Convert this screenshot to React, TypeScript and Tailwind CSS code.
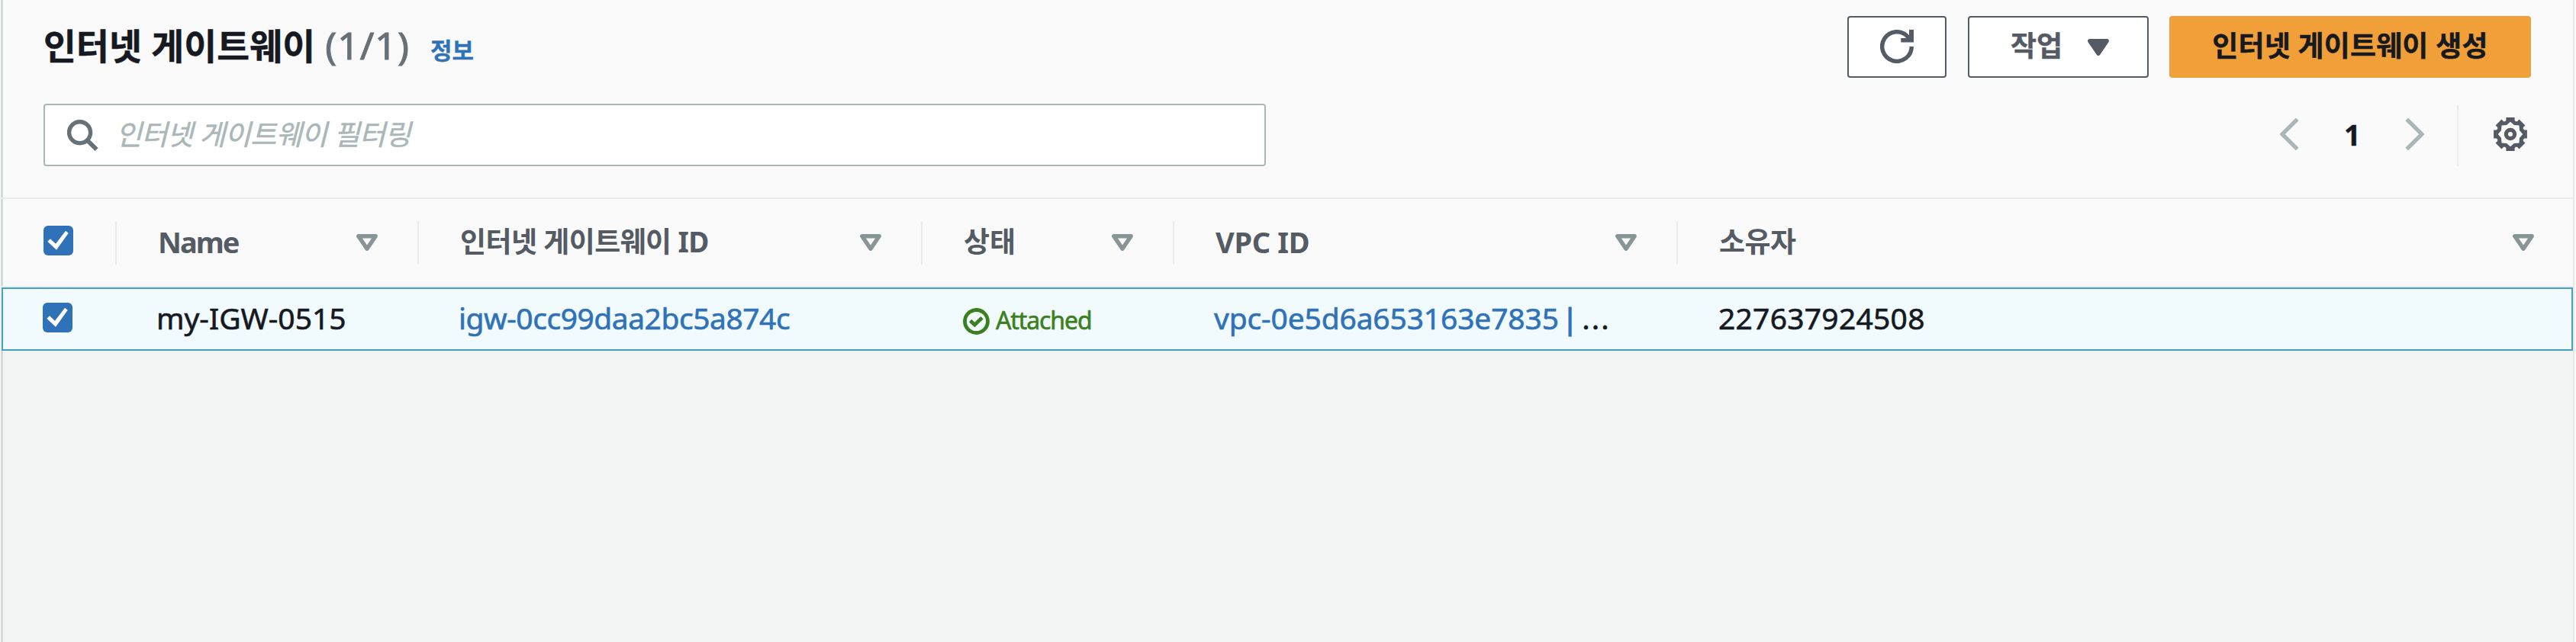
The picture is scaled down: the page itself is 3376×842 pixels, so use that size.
import type { ReactNode } from "react";

const polar = (radius: number, angle: number, offset = 0) => {
  const x = 22 + radius * Math.cos(angle) - offset * Math.sin(angle);
  const y = 22 + radius * Math.sin(angle) + offset * Math.cos(angle);
  return `${x.toFixed(2)} ${y.toFixed(2)}`;
};

const gearPath = (() => {
  const outer: string[] = [];
  const inner: string[] = [];
  for (let i = 0; i < 8; i++) {
    const a = (i * Math.PI) / 4;
    outer.push(polar(18.2, a, -5.6), polar(21.9, a, -5.6), polar(21.9, a, 5.6), polar(18.2, a, 5.6));
    outer.push(polar(18.2, a + Math.PI / 8));
    inner.push(polar(16.2, a), polar(13, a + Math.PI / 8));
  }
  return `M${outer.join("L")}ZM${inner.join("L")}Z`;
})();

function RefreshIcon() {
  return (
    <svg className="h-11 w-11" viewBox="0 0 44 44" fill="none">
      <path d="M41.3 22A19.3 19.3 0 1 1 36.6 9.4L40.5 13.5" stroke="#545b64" strokeWidth="5.4" />
      <path d="M38 0H44V16.5H27.3V11H38Z" fill="#545b64" />
    </svg>
  );
}

function GearIcon() {
  return (
    <svg className="h-11 w-11" viewBox="0 0 44 44">
      <path d={gearPath} fill="#545b64" fillRule="evenodd" />
      <circle cx="22" cy="22" r="5.6" fill="none" stroke="#545b64" strokeWidth="5.2" />
    </svg>
  );
}

function SearchIcon() {
  return (
    <svg className="h-[41px] w-[41px] shrink-0" viewBox="0 0 41 41" fill="none" stroke="#687078">
      <circle cx="16.6" cy="16.8" r="14" strokeWidth="5.4" />
      <path d="M26.3 27L38.6 39" strokeWidth="5.8" />
    </svg>
  );
}

function Chevron({ right = false }: { right?: boolean }) {
  return (
    <svg className="h-[42px] w-[25px]" viewBox="0 0 25 42" fill="none" stroke="#aab7b8" strokeWidth="5.4">
      <path d={right ? "M2.2 1.4L22 21L2.2 40.6" : "M22.8 1.4L3 21L22.8 40.6"} />
    </svg>
  );
}

function SortIcon({ filled = false }: { filled?: boolean }) {
  return (
    <svg className="h-[22px] w-7 shrink-0" viewBox="0 0 28 22" strokeLinejoin="round" strokeWidth="5.4">
      <path
        d="M2.8 2.7H25.2L14 19.2Z"
        fill={filled ? "#545b64" : "none"}
        stroke={filled ? "#545b64" : "#879596"}
      />
    </svg>
  );
}

function Checkbox() {
  return (
    <span role="checkbox" aria-checked="true" className="block h-[39px] w-[39px] rounded-[6px] bg-[#3072b7]">
      <svg className="h-full w-full" viewBox="0 0 39 39">
        <path d="M5.3 20.7L9 17.3L16 23.7L29 6.7L32.7 9.7L17 31.7Z" fill="#fff" />
      </svg>
    </span>
  );
}

function StatusIcon() {
  return (
    <svg className="h-[35px] w-[35px] shrink-0" viewBox="0 0 35 35" fill="none" stroke="#3b8020">
      <circle cx="17.5" cy="17.5" r="15" strokeWidth="4.8" />
      <path d="M9.6 16.6L15.4 22L25 12.8" strokeWidth="4.8" />
    </svg>
  );
}

function HeaderCell({ children, last = false }: { children: ReactNode; last?: boolean }) {
  return (
    <div
      className={`flex h-[57px] items-center justify-between border-r-2 pb-[3px] pl-[54px] ${
        last ? "border-transparent pr-[49px]" : "border-[#eaeded] pr-[52px]"
      }`}
    >
      {children}
      <span className="pt-[3px]">
        <SortIcon />
      </span>
    </div>
  );
}

export default function App() {
  return (
    <div className="flex h-[842px] w-[3376px] overflow-hidden whitespace-nowrap bg-[#f2f3f3] font-['Noto_Sans','Noto_Sans_CJK_KR',sans-serif] text-[#16191f]">
      <div className="w-[2px] bg-[#eff0f0]" />
      <main className="w-[3370px] shadow-[inset_1px_0_0_#b9c1c2,inset_2px_0_0_#e4e8e8]">
        <header className="h-[261px] border-b-2 border-[#eaeded] bg-[#fafafa] pl-[55px] pr-[55px] pt-[21px] shadow-[inset_1px_0_0_#b9c1c2,inset_2px_0_0_#e4e8e8]">
          <div className="flex h-[81px] items-center justify-between">
            <div className="flex items-baseline pt-[2px] leading-[80px]">
              <h1 className="text-[46.5px] font-bold tracking-[0.2px] [-webkit-text-stroke:0.5px]">인터넷 게이트웨이</h1>
              <span className="ml-[13px] text-[50px] tracking-[1px] text-[#687078] [-webkit-text-stroke:1px]">(1/1)</span>
              <a className="ml-[27px] text-[31px] font-bold text-[#2f72b8] [-webkit-text-stroke:0.3px]">정보</a>
            </div>
            <div className="flex text-[37px] font-bold leading-[60px] text-[#545b64]">
              <button className="flex h-[81px] w-[130px] items-center justify-center rounded-[4px] border-2 border-[#545b64] bg-white pb-px">
                <RefreshIcon />
              </button>
              <button className="ml-7 flex h-[81px] w-[237px] items-center justify-between rounded-[4px] border-2 border-[#545b64] bg-white pl-[54px] pr-[50px]">
                <span className="pb-[3px] [-webkit-text-stroke:0.4px]">작업</span>
                <SortIcon filled />
              </button>
              <button className="ml-[27px] flex h-[81px] w-[474px] items-center justify-center rounded-[4px] bg-[#f19f39] pb-[3px] tracking-[0.15px] text-[#16191f] [-webkit-text-stroke:0.4px]">
                인터넷 게이트웨이 생성
              </button>
            </div>
          </div>

          <div className="mt-[34px] flex h-[82px] items-center justify-between">
            <div className="flex h-[82px] w-[1602px] items-center rounded-[4px] border-2 border-[#aab7b8] bg-white pl-[29px]">
              <SearchIcon />
              <span className="ml-[23px] pb-[3px] text-[37px] italic leading-[60px] tracking-[-0.6px] text-[#aab7b8] [-webkit-text-stroke:0.5px]">
                인터넷 게이트웨이 필터링
              </span>
            </div>
            <div className="flex items-center pr-[5px]">
              <span className="pb-[2px]">
                <Chevron />
              </span>
              <span className="ml-[59px] w-[23px] pb-[3px] text-[38px] font-bold leading-[60px] [-webkit-text-stroke:0.4px]">1</span>
              <span className="ml-[57px] pb-[2px]">
                <Chevron right />
              </span>
              <span className="ml-[43px] h-[81px] w-[2px] bg-[#eaeded]" />
              <span className="ml-[46px] pb-[2px]">
                <GearIcon />
              </span>
            </div>
          </div>
        </header>

        <div className="grid h-[116px] grid-cols-[151px_396px_660px_330px_660px_1173px] items-center border-b-2 border-[#eaeded] bg-[#fafafa] text-[37px] font-bold leading-[50px] tracking-[-0.6px] text-[#545b64] shadow-[inset_1px_0_0_#b9c1c2,inset_2px_0_0_#e4e8e8]">
          <div className="flex h-[57px] items-center border-r-2 border-[#eaeded] pb-[5px] pl-[55px]">
            <Checkbox />
          </div>
          <HeaderCell>
            <span className="text-[38px] tracking-[-2px]">Name</span>
          </HeaderCell>
          <HeaderCell>인터넷 게이트웨이 ID</HeaderCell>
          <HeaderCell>
            <span className="tracking-normal">상태</span>
          </HeaderCell>
          <HeaderCell>
            <span className="text-[38px] tracking-[-0.3px]">VPC ID</span>
          </HeaderCell>
          <HeaderCell last>소유자</HeaderCell>
        </div>

        <div className="grid h-[83px] grid-cols-[149px_396px_660px_330px_660px_1171px] items-center border-2 border-[#459fc6] bg-[#f1fafd] text-[39px] leading-[50px] [-webkit-text-stroke:0.6px]">
          <div className="pb-[5px] pl-[52px]">
            <Checkbox />
          </div>
          <div className="pb-[3px] pl-[52px]">my-IGW-0515</div>
          <a className="pb-[3px] pl-[52px] tracking-[-0.48px] text-[#2f72b8]">igw-0cc99daa2bc5a874c</a>
          <div className="flex items-center pl-[53px] text-[32px] tracking-[-1.1px] text-[#3b8020]">
            <span className="pt-[5px]">
              <StatusIcon />
            </span>
            <span className="ml-[8px] pt-[2px]">Attached</span>
          </div>
          <div className="flex pb-[3px] pl-[52px]">
            <a className="tracking-[-0.15px] text-[#2f72b8]">vpc-0e5d6a653163e7835</a>
            <span className="ml-[4px] text-[#2f72b8] [-webkit-text-stroke:1.2px]">|</span>
            <span className="ml-[5px] tracking-[2px]">...</span>
          </div>
          <div className="pb-[3px] pl-[53px] tracking-[0.25px]">227637924508</div>
        </div>
      </main>
      <div className="w-[2px] bg-[#e8e8e8]" />
      <div className="w-[2px] bg-[#fafafa]" />
    </div>
  );
}
